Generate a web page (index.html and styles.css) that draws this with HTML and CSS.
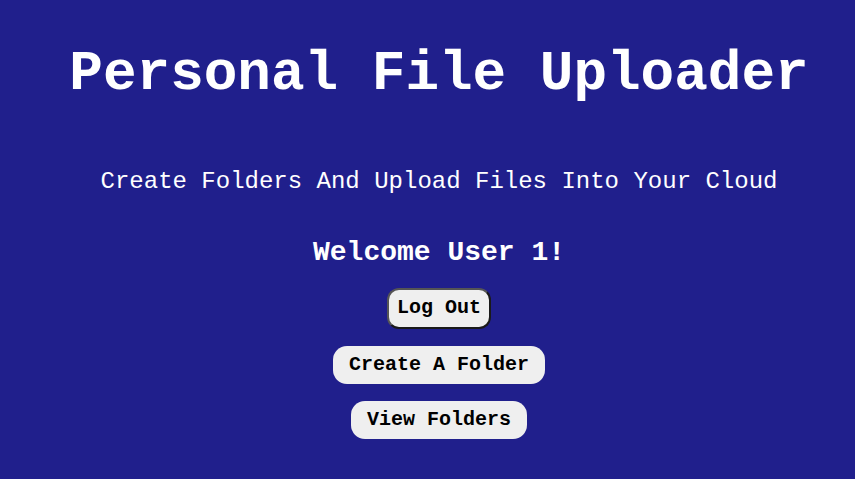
FILE: index.html
```html
<!DOCTYPE html>
<html>
<head>
<meta charset="utf-8">
<link rel="stylesheet" href="styles.css">
</head>
<body>
<main class="page">
  <h1 class="title">Personal File Uploader</h1>
  <p class="subtitle">Create Folders And Upload Files Into Your Cloud</p>
  <h2 class="welcome">Welcome User 1!</h2>
  <button class="btn btn-logout">Log Out</button>
  <button class="btn">Create A Folder</button>
  <button class="btn">View Folders</button>
</main>
</body>
</html>
```
FILE: styles.css
```css
html, body {
  margin: 0;
  padding: 0;
  background: #201f8c;
  height: 100%;
}
.page {
  display: flex;
  flex-direction: column;
  align-items: center;
  padding: 0 0 0 23px;
  font-family: "Liberation Mono", "DejaVu Sans Mono", monospace;
  color: #ffffff;
}
.title {
  margin: 42px 0 0;
  font-size: 56px;
  font-weight: bold;
  line-height: 64px;
}
.subtitle {
  margin: 62px 0 0;
  font-size: 24px;
  line-height: 28px;
}
.welcome {
  margin: 41px 0 0;
  font-size: 28px;
  font-weight: bold;
  line-height: 32px;
}
.btn {
  margin: 22px 0 0;
  font-family: "Liberation Mono", monospace;
  font-weight: bold;
  font-size: 20px;
  line-height: 22px;
  color: #000;
  background: #efefef;
  border: 0;
  border-radius: 14px;
  padding: 8px 16px;
}
.btn + .btn {
  margin-top: 17px;
}
.btn-logout {
  margin-top: 19px;
  border: 2px solid #1a1a1a;
  border-top-color: #555;
  border-left-color: #555;
  border-radius: 12px;
  padding: 7px 8px 8px;
}
```
